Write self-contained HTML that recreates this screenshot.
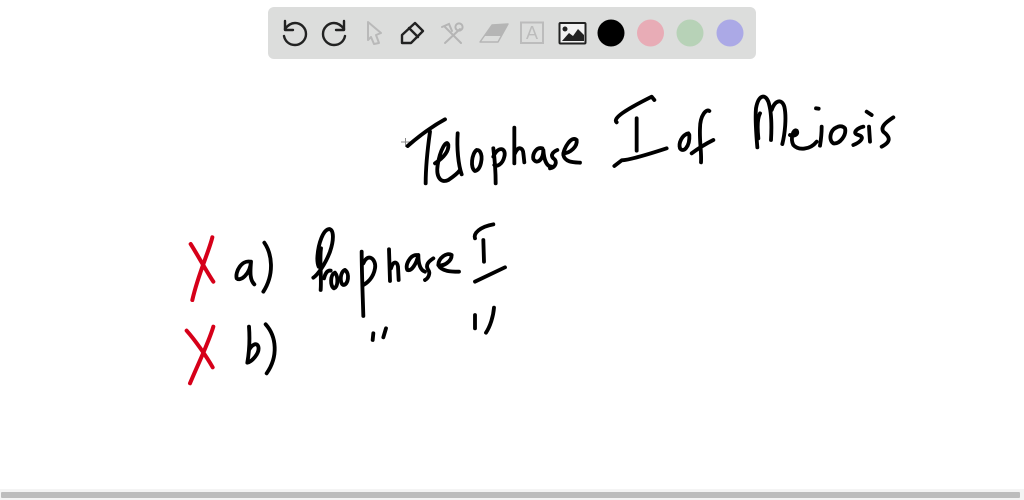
<!DOCTYPE html>
<html>
<head>
<meta charset="utf-8">
<style>
html,body{margin:0;padding:0;background:#fff;width:1024px;height:500px;overflow:hidden}
svg{display:block;position:absolute;left:0;top:0;filter:blur(.3px)}
.k{fill:none;stroke:#000;stroke-width:11.500;stroke-linecap:round;stroke-linejoin:round}
.r{fill:none;stroke:#d60019;stroke-width:12;stroke-linecap:round;stroke-linejoin:round}
</style>
</head>
<body>
<svg width="1024" height="500" viewBox="0 0 1024 500" xmlns="http://www.w3.org/2000/svg">
  <rect width="1024" height="500" fill="#fff"/>

  <!-- toolbar -->
  <rect x="268" y="7" width="488" height="52" rx="6" fill="#dcdddc"/>
  <g fill="none" stroke="#222" stroke-width="2.400" stroke-linecap="round" stroke-linejoin="round">
    <path d="M285 29 C288 25 291 23 295 23 C301 23 306 28 306 34 C306 40 301 45 295 45 C289 45 285 41 284 36"/>
    <path d="M285 21 L285 30 L293 30"/>
    <path d="M344 29 C341 25 338 23 334 23 C328 23 323 28 323 34 C323 40 328 45 334 45 C340 45 344 41 345 36"/>
    <path d="M344 21 L344 30 L336 30"/>
    <path d="M402 35 L415 23 L423 31 L411 43 L402 43 Z"/>
    <path d="M409 28 L418 37"/>
  </g>
  <!-- cursor -->
  <path d="M368 22 L381 33 L376 35 L379 43 L374 44 L371 37 L368 40 Z" fill="none" stroke="#b9b9b9" stroke-width="2" stroke-linejoin="round"/>
  <!-- tools -->
  <g fill="none" stroke="#b5b5b5" stroke-width="2" stroke-linecap="round">
    <path d="M445 27 L461 43"/>
    <path d="M460 29 L445 43"/>
    <path d="M442 27 L449 24 L452 31"/>
    <circle cx="459" cy="27" r="3.600"/>
  </g>
  <!-- eraser -->
  <path d="M480 42 L492 25 L508 24 L498 42 Z" fill="none" stroke="#b5b5b5" stroke-width="1.400" stroke-linejoin="round"/>
  <path d="M484 36 L492 25 L508 24 L501 36 Z" fill="#b5b5b5"/>
  <!-- text tool -->
  <rect x="521" y="22.500" width="22" height="20.500" fill="none" stroke="#bcbcbc" stroke-width="2"/>
  <text x="532" y="39" text-anchor="middle" font-family="Liberation Sans, sans-serif" font-size="18" fill="#bcbcbc">A</text>
  <!-- image tool -->
  <rect x="559.500" y="23" width="26" height="20.500" rx="1" fill="#f2f2f2" stroke="#222" stroke-width="2"/>
  <circle cx="565" cy="29" r="2.500" fill="#222"/>
  <path d="M562 41 L569 33 L573 36 L578 29 L584 35 L584 41 Z" fill="#222"/>
  <!-- colours -->
  <circle cx="611" cy="33" r="13.500" fill="#000"/>
  <circle cx="650.500" cy="33" r="13.500" fill="#e8acb6"/>
  <circle cx="690" cy="33" r="13.500" fill="#b7d2b7"/>
  <circle cx="730" cy="33" r="13.500" fill="#aba9e6"/>

  <!-- cursor plus -->
  <path d="M401 142 H410 M405.500 138 V147" stroke="#8a8a8a" stroke-width="1" fill="none"/>

  <!-- Telophase I -->
  <g transform="translate(395 85) scale(.33333)" class="k">
    <path d="M38 183 C70 155 110 125 150 103"/>
    <path d="M105 140 C98 190 92 240 92 295"/>
    <path d="M120 235 C135 225 162 205 160 180 C155 160 135 195 128 240 C122 280 140 295 160 285 C175 275 190 262 195 255"/>
    <path d="M188 145 C185 190 190 240 200 268"/>
    <path d="M245 195 C230 205 225 250 240 258 C258 255 265 215 255 200 C252 195 245 195 245 195"/>
    <path d="M295 190 C300 230 302 270 302 295"/>
    <path d="M295 215 C310 180 335 190 328 215 C322 240 305 245 298 240"/>
    <path d="M358 128 C358 170 358 210 358 235"/>
    <path d="M360 205 C370 180 385 190 385 205 C387 220 387 225 388 232"/>
    <path d="M442 190 C425 185 412 205 415 222 C425 240 445 225 445 195 C447 225 455 245 470 245"/>
    <path d="M487 195 C475 200 465 210 475 220 C490 230 480 248 465 250"/>
    <path d="M505 205 C525 205 548 185 545 165 C530 150 505 190 505 210 C510 232 535 232 555 233"/>
    <path d="M665 112 C652 100 690 75 770 35 L778 45"/>
    <path d="M725 100 L725 197"/>
    <path d="M658 243 L680 226 C700 225 760 208 815 190"/>
  </g>

  <!-- of Meiosis -->
  <g transform="translate(650 85) scale(.33333)" class="k">
    <path d="M115 145 C95 150 85 175 90 190 C100 205 120 185 118 150 C115 140 105 150 105 150"/>
    <path d="M178 78 C170 70 150 90 150 130 C148 170 155 200 153 232"/>
    <path d="M125 205 C145 190 170 175 190 165"/>
    <path d="M322 187 C318 140 315 100 318 70 C325 30 345 25 355 50 C365 80 365 130 363 165"/>
    <path d="M330 85 C322 100 322 130 325 160"/>
    <path d="M365 75 C375 45 395 40 403 65 C410 95 405 145 397 177"/>
    <path d="M420 150 C430 155 447 150 440 137 C430 130 420 160 430 180 C445 197 480 195 500 170"/>
    <path d="M515 125 C515 150 512 170 510 182"/>
    <path d="M498 70 L506 71"/>
    <path d="M560 127 C540 135 535 165 550 175 C570 178 590 150 585 130 C575 118 560 127 560 127"/>
    <path d="M640 125 C620 130 605 145 625 150 C645 155 635 170 610 180"/>
    <path d="M657 125 L660 170"/>
    <path d="M650 80 L665 90"/>
    <path d="M730 97 C710 110 690 125 700 140 C720 155 725 170 695 185"/>
  </g>

  <!-- a) b) with red crosses -->
  <g transform="translate(175 220) scale(.33333)">
    <g class="r">
      <path d="M47 72 C65 100 95 155 115 185"/>
      <path d="M112 52 C100 100 70 160 52 240"/>
      <path d="M35 332 C60 360 95 410 113 442"/>
      <path d="M115 320 C100 370 70 430 45 490"/>
    </g>
    <g class="k">
      <path d="M225 125 C200 120 180 155 185 175 C195 185 225 165 228 125 C225 160 225 180 238 193"/>
      <path d="M268 68 C290 100 300 160 265 215"/>
      <path d="M222 320 C225 360 222 400 217 428 C230 425 255 400 250 380 C245 365 230 375 222 390"/>
      <path d="M272 313 C305 350 310 410 275 460"/>
    </g>
  </g>

  <!-- Prophase I -->
  <g transform="translate(310 220) scale(.33333)" class="k">
    <path d="M10 173 C22 165 45 135 60 95 C72 60 72 30 58 27 C40 28 24 70 22 115 C22 125 24 135 26 140"/>
    <path d="M33 85 C28 120 35 170 32 210"/>
    <path d="M42 175 C46 160 52 150 62 152"/>
    <path d="M75 158 C60 163 60 200 72 205 C85 200 85 170 75 158"/>
    <path d="M105 150 C90 155 88 190 100 195 C115 195 120 160 105 150"/>
    <path d="M155 95 C155 150 158 220 160 288"/>
    <path d="M160 130 C175 95 200 120 195 145 C190 175 170 190 160 195"/>
    <path d="M237 88 L240 183"/>
    <path d="M243 145 C250 120 262 125 264 140 L266 180"/>
    <path d="M320 105 C300 105 285 135 292 150 C305 155 320 130 325 105 C325 130 330 150 345 155"/>
    <path d="M370 115 C355 125 345 135 355 150 C362 160 355 175 345 180"/>
    <path d="M385 135 C400 140 425 125 425 105 C410 95 385 115 385 135 C395 155 425 155 447 155"/>
    <path d="M495 55 C490 40 510 20 550 13"/>
    <path d="M520 60 L522 125"/>
    <path d="M495 185 L585 142"/>
    <path d="M190 340 L188 360"/>
    <path d="M228 325 L220 352"/>
    <path d="M495 285 L495 325"/>
    <path d="M552 263 C550 290 540 320 528 338"/>
  </g>

  <!-- bottom scrollbar -->
  <rect x="0" y="489" width="1024" height="11" fill="#f4f4f4"/>
  <rect x="1" y="492" width="1019" height="6" rx="1" fill="#bdbdbd"/>
</svg>
</body>
</html>
